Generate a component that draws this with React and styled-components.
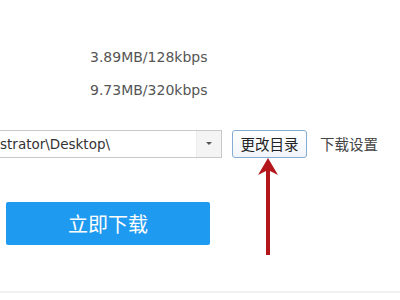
import React from "react";
import styled, { createGlobalStyle } from "styled-components";

const Global = createGlobalStyle`
  html, body {
    margin: 0;
    padding: 0;
    background: #ffffff;
    overflow: hidden;
  }
  body {
    font-family: "DejaVu Sans", "Noto Sans CJK SC", sans-serif;
  }
`;

const sizes = ["3.89MB/128kbps", "9.73MB/320kbps"];

const App = () => {
  return (
    <Page>
      <Global />
      <SizeList>
        {sizes.map((s) => (
          <SizeRow key={s}>{s}</SizeRow>
        ))}
      </SizeList>

      <PathRow>
        <PathBox>
          <PathText>strator\Desktop\</PathText>
          <DropToggle>
            <Caret />
          </DropToggle>
        </PathBox>
        <ChangeButton>更改目录</ChangeButton>
        <SettingLink>下载设置</SettingLink>
      </PathRow>

      <DownloadButton>立即下载</DownloadButton>

      <Footer />

      {/* 빨간 화살표 표시 */}
      <Arrow width="24" height="102" viewBox="0 0 24 102">
        <rect x="10" y="12" width="4" height="87" fill="#b3171c" />
        <path d="M12 2 L22 19 L12 14 L2 19 Z" fill="#b3171c" />
      </Arrow>
    </Page>
  );
};

const Page = styled.div`
  position: relative;
  width: 400px;
  height: 300px;
  display: flex;
  flex-direction: column;
  overflow: hidden;
`;

const SizeList = styled.div`
  display: flex;
  flex-direction: column;
  padding: 41px 0 0 90px;
`;

const SizeRow = styled.div`
  height: 33px;
  line-height: 33px;
  font-size: 14px;
  color: #555555;
`;

const PathRow = styled.div`
  display: flex;
  align-items: center;
  margin-top: 22px;
  height: 29px;
`;

const PathBox = styled.div`
  display: flex;
  align-items: stretch;
  width: 221px;
  height: 26px;
  border: 1px solid #c9c9c9;
  border-left: none;
  background: #ffffff;
`;

const PathText = styled.div`
  flex: 1;
  line-height: 26px;
  font-size: 13.5px;
  color: #333333;
  white-space: nowrap;
  overflow: hidden;
`;

const DropToggle = styled.div`
  width: 24px;
  display: flex;
  align-items: center;
  justify-content: center;
  background: #f4f4f4;
  border-left: 1px solid #ececec;
`;

const Caret = styled.span`
  width: 0;
  height: 0;
  border-left: 3px solid transparent;
  border-right: 3px solid transparent;
  border-top: 3px solid #555555;
`;

const ChangeButton = styled.button`
  margin-left: 10px;
  width: 75px;
  height: 28px;
  padding: 0;
  border: 1px solid #86acd4;
  border-radius: 3px;
  background: linear-gradient(#ffffff, #f1f5fa);
  font-family: "Noto Sans CJK SC", sans-serif;
  font-size: 14.5px;
  color: #222222;
`;

const SettingLink = styled.span`
  margin-left: 13px;
  font-family: "Noto Sans CJK SC", sans-serif;
  font-size: 14.5px;
  color: #444444;
`;

const DownloadButton = styled.button`
  margin: 44px 0 0 6px;
  width: 204px;
  height: 43px;
  border: none;
  border-radius: 2px;
  background: #1e9af0;
  color: #ffffff;
  font-family: "Noto Sans CJK SC", sans-serif;
  font-size: 20px;
  font-weight: 400;
`;

const Footer = styled.div`
  margin-top: 46px;
  height: 2px;
  background: #f1f1f1;
`;

const Arrow = styled.svg`
  position: absolute;
  left: 256px;
  top: 156px;
`;

export default App;
